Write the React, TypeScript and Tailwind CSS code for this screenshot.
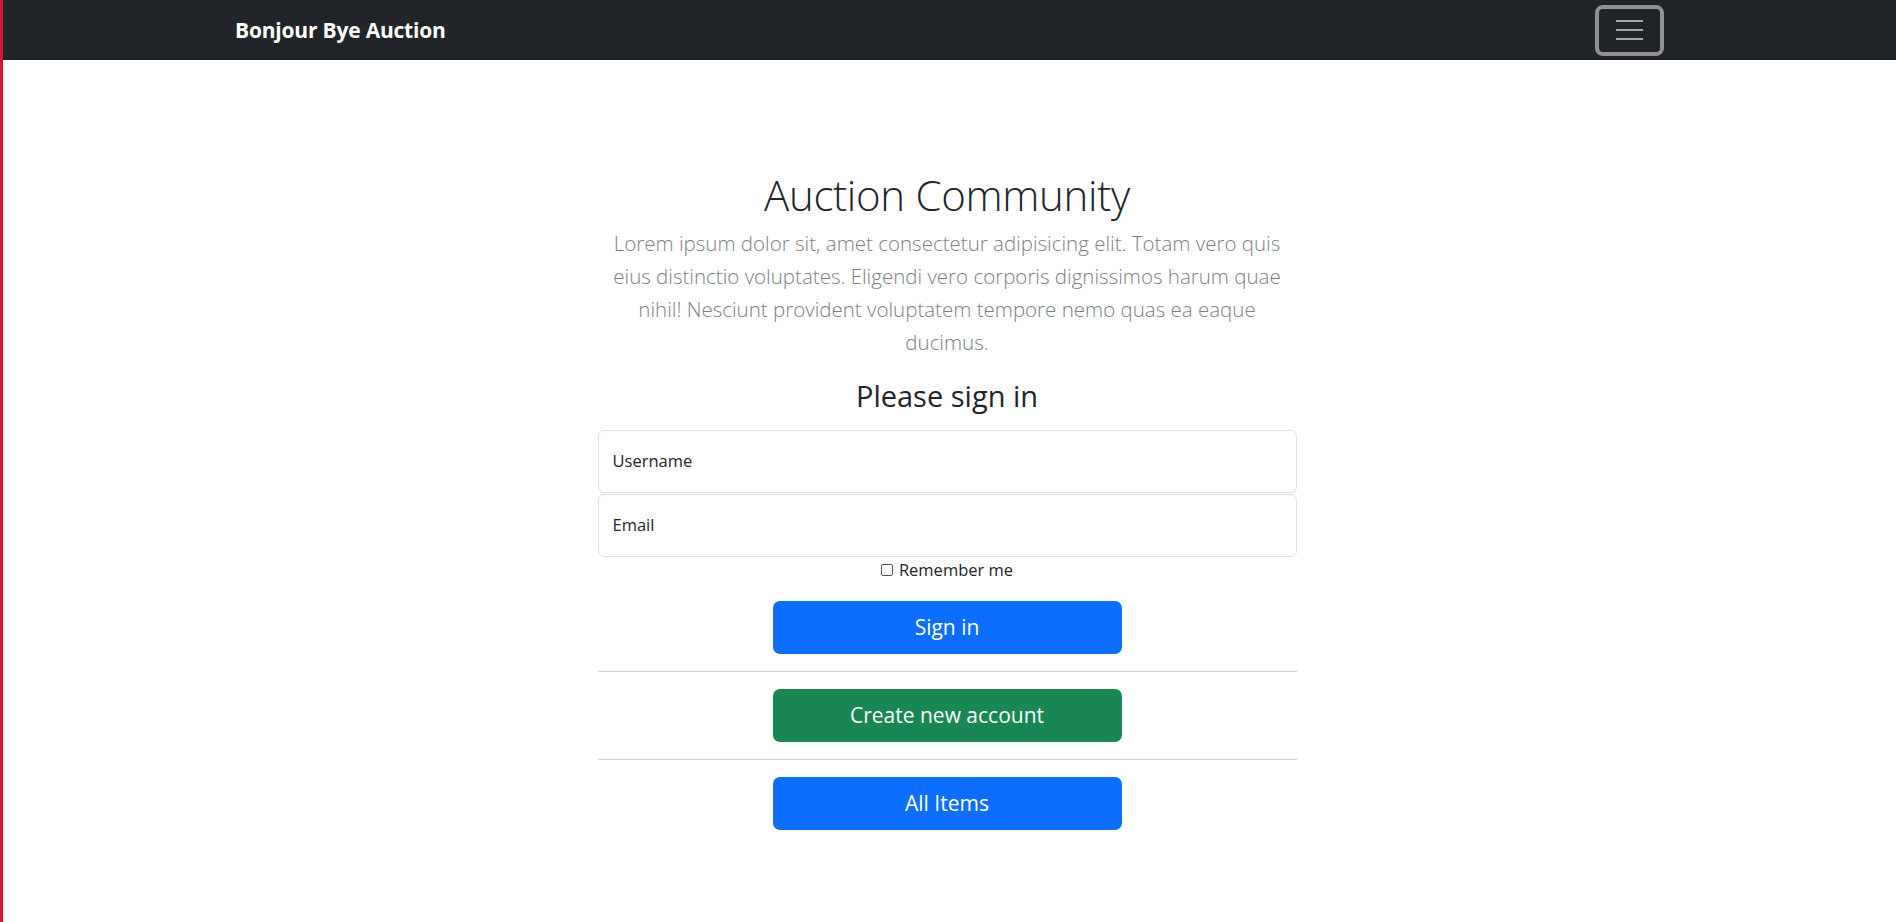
import React from 'react';

const font = { fontFamily: '"Open Sans", "Noto Sans", Arial, sans-serif' };

function Navbar() {
  return (
    <nav className="h-[60px] bg-[#212529] flex items-center justify-between pl-[232px] pr-[232px]">
      <a className="text-white font-bold text-[21px] leading-none tracking-[-0.2px]">Bonjour Bye Auction</a>
      <button className="w-[69px] h-[51px] rounded-[8px] border-[4px] border-[#8f9194] flex flex-col items-center justify-center gap-[7px]">
        <span className="block w-[27px] h-[2px] bg-[#a3a5a7]" />
        <span className="block w-[27px] h-[2px] bg-[#a3a5a7]" />
        <span className="block w-[27px] h-[2px] bg-[#a3a5a7]" />
      </button>
    </nav>
  );
}

function Btn({ label, color }: { label: string; color: string }) {
  return (
    <button className={`w-[349px] h-[53px] rounded-[7px] text-white text-[21px] ${color}`}>{label}</button>
  );
}

export default function App() {
  return (
    <div style={font} className="min-h-[922px] bg-white border-l-[3px] border-[#d21a2c] text-[#212529]">
      <Navbar />
      <main className="flex flex-col items-center pt-[109px] pr-[5px]">
        <h1 className="text-[42px] font-light leading-[51px] tracking-[-0.3px]">Auction Community</h1>
        <p className="mt-[7px] text-[20.5px] font-light leading-[33px] text-[#7b8086] text-center">
          <span className="block">Lorem ipsum dolor sit, amet consectetur adipisicing elit. Totam vero quis</span>
          <span className="block">eius distinctio voluptates. Eligendi vero corporis dignissimos harum quae</span>
          <span className="block">nihil! Nesciunt provident voluptatem tempore nemo quas ea eaque</span>
          <span className="block">ducimus.</span>
        </p>
        <h3 className="mt-[18px] text-[29px] leading-[37px]">Please sign in</h3>
        <form className="mt-[16px] w-[699px] flex flex-col items-center">
          <div className="w-full h-[63px] border border-[#dee2e6] rounded-[6px] flex items-center px-[14px] text-[16.5px]">Username</div>
          <div className="mt-[1px] w-full h-[63px] border border-[#dee2e6] rounded-[6px] flex items-center px-[14px] text-[16.5px]">Email</div>
          <label className="h-[26px] flex items-center gap-[6px] text-[16.5px]">
            <span className="block w-[12px] h-[12px] border border-[#555] rounded-[2px]" />
            Remember me
          </label>
          <div className="mt-[18px]">
            <Btn label="Sign in" color="bg-[#0d6efd]" />
          </div>
          <hr className="w-full my-[17px] border-0 border-t border-[#cfd1d3]" />
          <Btn label="Create new account" color="bg-[#198754]" />
          <hr className="w-full my-[17px] border-0 border-t border-[#cfd1d3]" />
          <Btn label="All Items" color="bg-[#0d6efd]" />
        </form>
      </main>
    </div>
  );
}
